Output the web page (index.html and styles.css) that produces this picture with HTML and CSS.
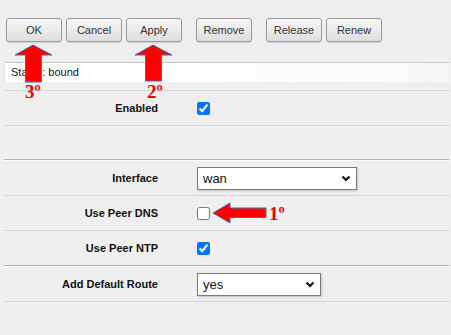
FILE: index.html
```html
<!DOCTYPE html>
<html>
<head>
<meta charset="utf-8">
<link rel="stylesheet" href="styles.css">
</head>
<body>
<div class="page">
  <div class="toolbar">
    <button class="btn">OK</button>
    <button class="btn">Cancel</button>
    <button class="btn">Apply</button>
    <button class="btn gap">Remove</button>
    <button class="btn gap">Release</button>
    <button class="btn tight">Renew</button>
  </div>
  <div class="status">Status: bound</div>
  <div class="form">
    <div class="row">
      <div class="label">Enabled</div>
      <div class="ctrl"><input type="checkbox" checked></div>
    </div>
    <div class="spacer"></div>
    <div class="section">
      <div class="row">
        <div class="label">Interface</div>
        <div class="ctrl">
          <div class="select wide"><span>wan</span>
            <svg class="chev" width="10" height="7" viewBox="0 0 10 7"><path d="M1.5 1.5 L5 5 L8.5 1.5" fill="none" stroke="#111" stroke-width="2.2"/></svg>
          </div>
        </div>
      </div>
      <div class="row">
        <div class="label">Use Peer DNS</div>
        <div class="ctrl"><input type="checkbox"></div>
      </div>
      <div class="row last">
        <div class="label">Use Peer NTP</div>
        <div class="ctrl"><input type="checkbox" checked></div>
      </div>
    </div>
    <div class="section">
      <div class="row">
        <div class="label">Add Default Route</div>
        <div class="ctrl">
          <div class="select narrow"><span>yes</span>
            <svg class="chev" width="10" height="7" viewBox="0 0 10 7"><path d="M1.5 1.5 L5 5 L8.5 1.5" fill="none" stroke="#111" stroke-width="2.2"/></svg>
          </div>
        </div>
      </div>
    </div>
  </div>

  <svg class="arrow a3" width="42" height="40" viewBox="0 0 42 40">
    <polygon points="20,1 39,11 28.5,11 28.5,38 12.5,38 12.5,11 2,11" fill="#ff0000" stroke="#4a6aa5" stroke-width="1"/>
  </svg>
  <div class="mark m3">3º</div>
  <svg class="arrow a2" width="42" height="40" viewBox="0 0 42 40">
    <polygon points="20,1 39,11 28.5,11 28.5,37 12.5,37 12.5,11 2,11" fill="#ff0000" stroke="#4a6aa5" stroke-width="1"/>
  </svg>
  <div class="mark m2">2º</div>
  <svg class="arrow a1" width="58" height="24" viewBox="0 0 58 24">
    <polygon points="1,11 18,1 18,6 54,6 54,15.5 18,15.5 18,21" fill="#ff0000" stroke="#4a6aa5" stroke-width="1"/>
  </svg>
  <div class="mark m1">1º</div>
</div>
</body>
</html>
```

FILE: styles.css
```css
html, body {
  margin: 0;
  padding: 0;
  background: #efefef;
}
body {
  font-family: "Liberation Sans", Arial, sans-serif;
  font-size: 11px;
  color: #222;
}
.page {
  position: relative;
  width: 445px;
  height: 335px;
  margin: 0 2px 0 4px;
}
.toolbar {
  display: flex;
  padding: 18px 0 0 2px;
  height: 24px;
}
.btn {
  box-sizing: border-box;
  width: 56px;
  height: 24px;
  margin: 0 4px 0 0;
  padding: 0;
  border: 1px solid #9a9a9a;
  border-radius: 3px;
  background: linear-gradient(#f7f7f7, #dedede);
  box-shadow: 0 1px 1px rgba(0,0,0,0.12);
  font-family: "Liberation Sans", Arial, sans-serif;
  font-size: 11px;
  color: #333;
}
.btn.gap { margin-left: 10px; }
.btn.tight { margin-left: 0; }
.status {
  margin-top: 20px;
  height: 19px;
  border-top: 1px solid #c9c9c9;
  border-left: 1px solid #e2e2e2;
  background: linear-gradient(to right, #ffffff 40%, #f7f7f7);
  padding-left: 6px;
  line-height: 19px;
  color: #111;
}
.form {
  margin-top: 8px;
  border-top: 1px solid #d6d6d6;
}
.row {
  display: flex;
  align-items: center;
  height: 34px;
  border-bottom: 1px solid #d6d6d6;
}
.row.last { border-bottom: none; }
.label {
  width: 154px;
  text-align: right;
  font-weight: bold;
  color: #111;
}
.ctrl {
  margin-left: 39px;
  display: flex;
  align-items: center;
}
.ctrl input {
  margin: 0;
  width: 13px;
  height: 13px;
  accent-color: #0075ff;
}
.spacer { height: 33px; }
.section {
  border-top: 1px solid #b0b0b0;
  box-shadow: inset 0 1px 0 #ffffff;
  padding-top: 1px;
}
.select {
  box-sizing: border-box;
  display: flex;
  align-items: center;
  justify-content: space-between;
  height: 23px;
  padding: 0 5px 0 5px;
  background: #fff;
  border: 1px solid #7a7a7a;
  box-shadow: 1px 1px 2px rgba(0,0,0,0.2);
  font-size: 13px;
  color: #111;
}
.select.wide { width: 160px; }
.select.narrow { width: 124px; }
.arrow { position: absolute; }
.a3 { left: 9px; top: 44px; }
.a2 { left: 129px; top: 44px; }
.a1 { left: 208px; top: 202px; }
.mark {
  position: absolute;
  font-family: "Liberation Serif", "Times New Roman", serif;
  font-weight: bold;
  font-size: 19px;
  color: #ee0000;
  line-height: 1;
}
.m3 { left: 21px; top: 82px; }
.m2 { left: 143px; top: 82px; }
.m1 { left: 265px; top: 204px; }
```
